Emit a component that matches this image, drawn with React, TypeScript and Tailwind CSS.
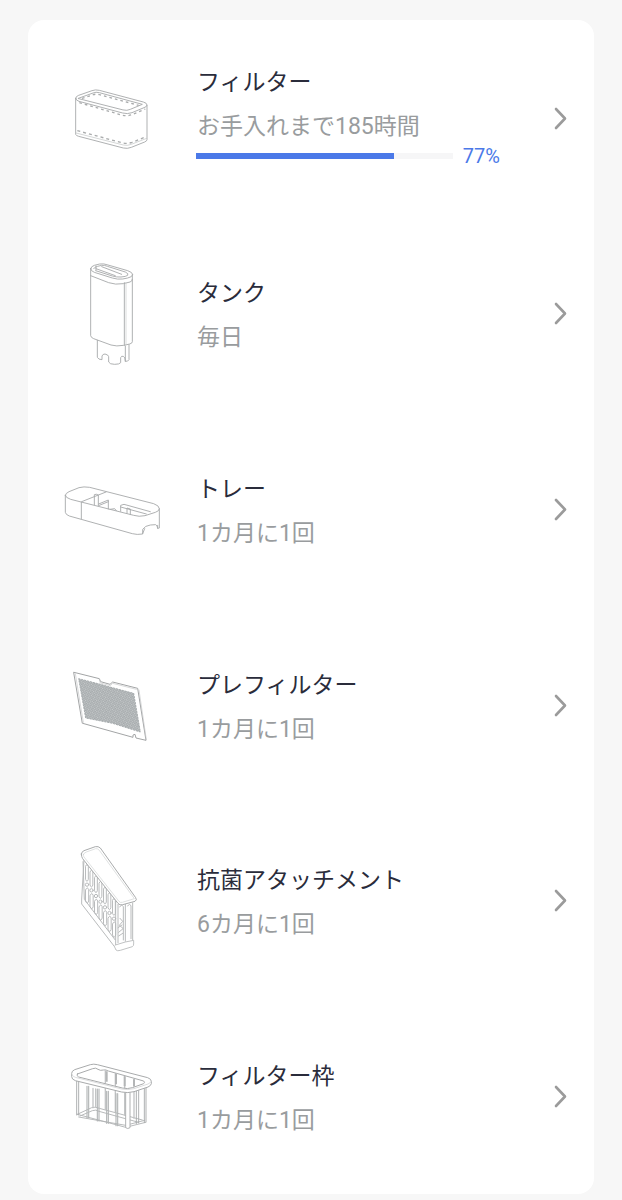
import type { ReactNode } from "react";

type Part = {
  name: string;
  note: string;
  icon: ReactNode;
  progress?: number;
};

function Drawing({ viewBox, children }: { viewBox: string; children: ReactNode }) {
  return (
    <svg
      viewBox={viewBox}
      className="h-28 w-24 shrink-0"
      fill="none"
      stroke="#a9abac"
      strokeWidth="2.8"
      strokeLinecap="round"
      strokeLinejoin="round"
      aria-hidden="true"
    >
      {children}
    </svg>
  );
}

function FilterIcon() {
  return (
    <Drawing viewBox="12 -39 288 336">
      <path d="M47 70V178Q48 182 56 184L190 219Q202 222 214 217L254 201Q261 198 261 194V91" />
      <path d="M47 70Q47 64 56 61L96 47Q106 43 118 46L250 81Q261 84 261 90Q261 95 252 98L216 113Q202 118 188 114L57 79Q47 76 47 70Z" />
      <path d="M55 70L99 54Q108 50 118 53L247 88L211 103Q201 108 190 105Z" />
      <path d="M48 174L190 210Q202 213 214 208L260 190" stroke="#c0c2c3" strokeWidth="2" />
      <path
        d="M58 83L188 121Q202 124 216 119L256 102M66 70L100 59Q109 56 119 59L236 91"
        strokeWidth="4"
        strokeDasharray="8 9"
        strokeLinecap="butt"
      />
      <path d="M52 167L188 204Q202 207 216 202L256 186" strokeWidth="4" strokeDasharray="9 9" strokeLinecap="butt" />
    </Drawing>
  );
}

function TankIcon() {
  return (
    <Drawing viewBox="-33 8 288 336">
      <path d="M47 43V244Q48 250 56 253L108 272Q124 277 146 273L164 269Q172 267 172 262V60" />
      <path d="M47 43Q48 36 58 33L74 29Q86 27 99 32L158 49Q173 54 173 61Q172 68 158 71L143 74Q128 76 112 71L58 54Q47 50 47 43Z" />
      <path d="M47 64L101 85Q121 92 145 88L165 83Q172 81 172 75M148 85V273" />
      <path d="M153 85V271" stroke="#c9cbcc" strokeWidth="2" />
      <path d="M56 43Q58 38 68 36L80 33Q88 32 97 36L151 53Q162 58 158 63Q153 67 138 68Q125 69 112 65L62 49M80 37L140 60M63 35V47M63 43L121 64" />
      <path d="M67 258V309Q70 316 81 316V305Q83 299 90 299Q100 301 101 307V323Q104 330 119 330Q134 330 137 325V310Q139 304 145 306Q151 308 151 321Q159 322 162 316V271M151 275V321" />
    </Drawing>
  );
}

function TrayIcon() {
  return (
    <Drawing viewBox="27 -66 288 336">
      <path d="M31 61V112Q32 119 43 123L232 176Q246 180 263 177V163Q270 152 286 150L302 149Q307 151 308 160L313 159V101" />
      <path d="M31 61Q31 55 42 50L72 38Q86 34 104 37L296 86Q313 92 313 101Q313 108 301 112L270 122Q252 126 236 121L47 73Q31 68 31 61Z" />
      <path d="M79 82V131M80 80L153 51M118 89V59Q124 56 130 60V92M131 87L160 75V102M133 91L160 80M165 103L179 101L184 107M197 109V91L207 88L286 110M197 96L274 117M216 115V99L226 102V119" />
      <path d="M308 151V160M263 176L269 161" />
    </Drawing>
  );
}

function PreFilterIcon() {
  return (
    <Drawing viewBox="12 -33 288 336">
      <defs>
        <pattern id="mesh" width="8" height="8" patternUnits="userSpaceOnUse" patternTransform="rotate(15)">
          <rect width="8" height="8" fill="#a4a9ab" stroke="none" />
          <circle cx="2" cy="2" r="1.8" fill="#d2d5d6" stroke="none" />
          <circle cx="6" cy="6" r="1.8" fill="#d2d5d6" stroke="none" />
        </pattern>
      </defs>
      <path d="M42 37L118 56L122 65L150 73L158 66L233 85L258 241L228 234L225 223L219 225L219 232L68 190Z" stroke="#a3a5a6" strokeWidth="3" />
      <path d="M46 41L70 187M118 60L121 69L151 77L158 70L229 88M237 90L259 239" stroke="#c5c7c8" strokeWidth="2" />
      <path d="M56 56L118 72L153 82L221 100L241 216L158 190L77 174Z" fill="url(#mesh)" stroke="#a3a8aa" strokeDasharray="4 5" />
    </Drawing>
  );
}

const attachmentSlats = [0, 1, 2, 3, 4, 5, 6];

function AttachmentIcon() {
  return (
    <Drawing viewBox="-18 14 288 336">
      <g stroke="#b4b6b7" strokeWidth="2.8">
        <path d="M42 63L35 179V194L132 320M39 67L43 180L135 301" />
        {attachmentSlats.map((i) => (
          <g key={i} transform={`translate(${i * 13.5} ${i * 17})`}>
            <path d="M47 80Q51 70 55 81V120Q51 132 47 121ZM47 151Q52 140 56 151V185Q52 198 47 186Z" />
            <circle cx="51" cy="136" r="5" />
          </g>
        ))}
        <path d="M137 185V318M144 195V310M149 203Q155 193 160 202V302M166 195V306M173 200Q179 190 183 200V298M188 191V306M144 265L156 257M146 279L158 269M146 290L158 282M150 237L158 246L148 258L159 267" />
      </g>
      <path d="M132 319L138 332Q142 336 151 333L187 322Q191 320 191 314V303L166 308L136 317" fill="white" stroke="#bbbdbe" />
      <path d="M34 44Q34 38 42 34L76 22Q85 20 91 26L197 175Q202 182 195 186L158 196Q149 199 144 192L38 58Q34 52 34 44Z" fill="white" strokeWidth="3" />
      <path d="M40 46Q41 41 49 38L77 28Q83 27 88 33L193 178L157 189Q151 191 147 186L42 53Q39 49 40 46Z" fill="white" stroke="#cfd1d2" strokeWidth="2" />
    </Drawing>
  );
}

const frameBars = [
  [81, 94, 188],
  [112, 102, 198],
  [140, 109, 205],
  [168, 116, 212],
];

function FilterFrameIcon() {
  return (
    <Drawing viewBox="12 -45 288 336">
      <path d="M52 178L95 158Q106 154 118 160L247 195M60 183L97 167Q107 163 117 169L236 202M52 178L197 217L257 202M56 186L197 211L254 196" stroke="#b3b5b6" />
      <path d="M99 100V158M107 102V157M136 48V164M166 56V172M194 64V180M222 73V190" stroke="#c3c5c6" strokeWidth="4" />
      {frameBars.map(([x, top, bottom]) => (
        <path key={x} d={`M${x} ${top}V${bottom}M${x + 5} ${top}V${bottom}`} stroke="#b2b5b6" strokeWidth="3.4" />
      ))}
      <path d="M50 76V180M56 78V180M229 104V206M236 102V204M253 94V203M258 92V201" />
      <path d="M197 108V218Q203 223 210 218V107Z" fill="white" />
      <path
        d="M35 54Q35 48 44 44L91 29Q101 26 112 29L263 68Q274 72 274 79V86Q273 92 264 96L222 110Q203 115 185 111L46 77Q35 73 35 66ZM52 57L98 41Q108 37 114 43Q121 48 130 45Q137 43 145 48L251 78Q256 82 251 86L217 98Q202 103 187 99L56 66Q48 62 52 57Z"
        fill="white"
        fillRule="evenodd"
        strokeWidth="3"
      />
      <path d="M35 57Q36 64 46 67L185 102Q203 106 222 101L264 87Q273 83 274 79" stroke="#cacccd" strokeWidth="2" />
      <path d="M140 49V80M168 56V88M194 64V94M222 73V93" stroke="#b3b5b6" strokeWidth="6" strokeLinecap="butt" />
    </Drawing>
  );
}

function Chevron() {
  return (
    <svg
      viewBox="0 0 16 24"
      className="h-6 w-4 shrink-0"
      fill="none"
      stroke="#9b9b9b"
      strokeWidth="2.6"
      strokeLinecap="round"
      strokeLinejoin="round"
      aria-hidden="true"
    >
      <path d="M4 3L13 12.5L4 22" />
    </svg>
  );
}

const parts: Part[] = [
  { name: "フィルター", note: "お手入れまで185時間", icon: <FilterIcon />, progress: 77 },
  { name: "タンク", note: "毎日", icon: <TankIcon /> },
  { name: "トレー", note: "1カ月に1回", icon: <TrayIcon /> },
  { name: "プレフィルター", note: "1カ月に1回", icon: <PreFilterIcon /> },
  { name: "抗菌アタッチメント", note: "6カ月に1回", icon: <AttachmentIcon /> },
  { name: "フィルター枠", note: "1カ月に1回", icon: <FilterFrameIcon /> },
];

function PartRow({ part }: { part: Part }) {
  return (
    <li className="flex">
      <button type="button" className="flex w-full items-center pr-[26px] pl-9 text-left">
        {part.icon}
        <span className="flex min-w-0 flex-1 flex-col pt-1.5 pr-[52px] pl-9">
          <span className="mb-2.5 pl-px text-[23px] leading-[34px] text-[#2a2c3b]">{part.name}</span>
          <span className="pl-px text-[23px] leading-[34px] text-[#999c9e]">{part.note}</span>
          {part.progress !== undefined && (
            <span className="mb-2 flex h-6 items-center gap-2.5">
              <span
                role="progressbar"
                aria-label={part.name}
                aria-valuenow={part.progress}
                aria-valuemin={0}
                aria-valuemax={100}
                className="flex h-1.5 flex-1 bg-[#f6f6f7]"
              >
                <span className="bg-[#4b79e8]" style={{ width: `${part.progress}%` }} />
              </span>
              <span className="text-[20px] leading-6 text-[#4b79e8]">{part.progress}%</span>
            </span>
          )}
        </span>
        <Chevron />
      </button>
    </li>
  );
}

export default function App() {
  return (
    <main className="flex min-h-screen flex-col bg-[#f7f7f7] px-7 pt-5 pb-1.5 font-[Roboto,'Noto_Sans_CJK_JP',sans-serif]" lang="ja">
      <ul className="grid flex-1 auto-rows-fr rounded-2xl bg-white">
        {parts.map((part) => (
          <PartRow key={part.name} part={part} />
        ))}
      </ul>
    </main>
  );
}
